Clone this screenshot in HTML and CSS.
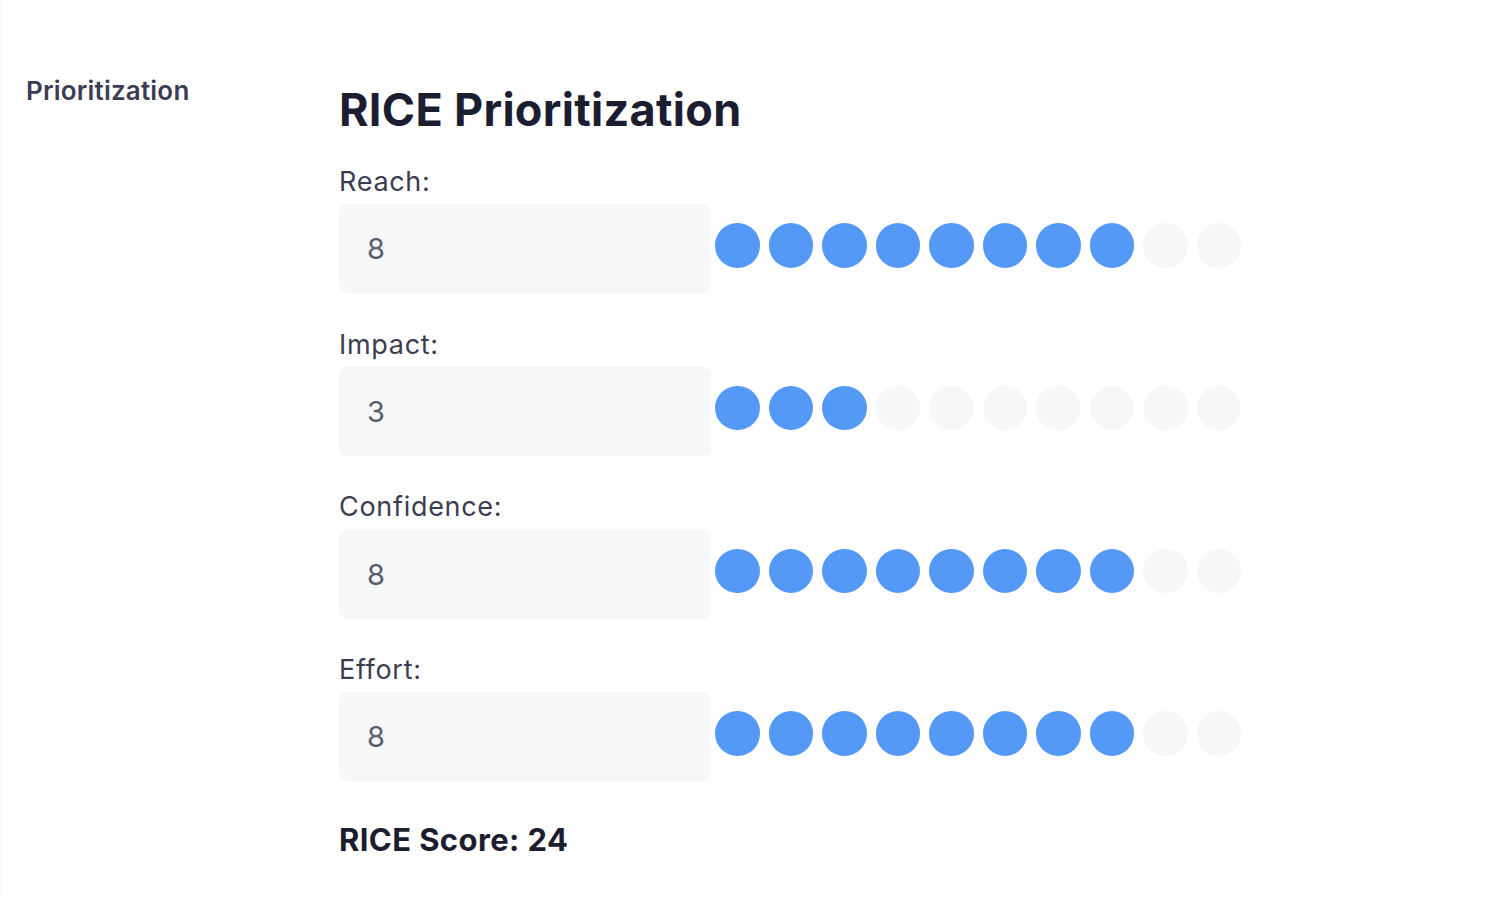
FILE: index.html
```html
<!DOCTYPE html>
<html lang="en">
<head>
    <meta charset="UTF-8">
    <meta name="viewport" content="width=device-width, initial-scale=1.0">
    <title>RICE Prioritization</title>
    <link rel="stylesheet" href="styles.css">
</head>
<body>
    <div class="page">
        <aside class="side">
            <div class="side-title">Prioritization</div>
        </aside>
        <main class="rice">
            <h1>RICE Prioritization</h1>

            <div class="field">
                <label>Reach:</label>
                <div class="row">
                    <div class="value">8</div>
                    <div class="dots" data-value="8"></div>
                </div>
            </div>

            <div class="field">
                <label>Impact:</label>
                <div class="row">
                    <div class="value">3</div>
                    <div class="dots" data-value="3"></div>
                </div>
            </div>

            <div class="field">
                <label>Confidence:</label>
                <div class="row">
                    <div class="value">8</div>
                    <div class="dots" data-value="8"></div>
                </div>
            </div>

            <div class="field">
                <label>Effort:</label>
                <div class="row">
                    <div class="value">8</div>
                    <div class="dots" data-value="8"></div>
                </div>
            </div>

            <div class="score">RICE Score: 24</div>
        </main>
    </div>

    <script>
        // fill each dot row, 10 dots, first n are on
        document.querySelectorAll('.dots').forEach(function (box) {
            const n = parseInt(box.dataset.value, 10);
            for (let i = 0; i < 10; i++) {
                const dot = document.createElement('span');
                dot.className = i < n ? 'dot on' : 'dot';
                box.appendChild(dot);
            }
        });
    </script>
</body>
</html>
```

FILE: styles.css
```css
body {
    margin: 0;
    font-family: Inter, "Noto Sans", sans-serif;
    background: #fff;
    color: #1b1d30;
}
.page {
    display: flex;
    min-height: 898px;
    border-left: 3px solid #fafafa;
}
.side {
    width: 313px;
    padding: 75px 0 0 23px;
}
.side-title {
    font-size: 26px;
    line-height: 1.2;
    font-weight: 600;
    letter-spacing: 0.2px;
    color: #3b3d52;
}
.rice {
    padding-top: 83px;
}
h1 {
    margin: 0 0 29px 0;
    font-size: 45px;
    line-height: 1.2;
    font-weight: 700;
    letter-spacing: 0.3px;
    color: #1b1d30;
}
.field {
    margin-bottom: 35.3px;
}
.field label {
    display: block;
    font-size: 27px;
    line-height: 1.2;
    font-weight: 400;
    letter-spacing: 0.7px;
    color: #3b3d52;
    margin-bottom: 6px;
}
.row {
    display: flex;
    align-items: center;
    gap: 4px;
}
.value {
    box-sizing: border-box;
    width: 372px;
    height: 89px;
    padding: 0 28px;
    display: flex;
    align-items: center;
    border-radius: 8px;
    background: #f6f7f9;
    font-size: 29px;
    color: #5a5c70;
}
.dots {
    display: flex;
    gap: 9px;
    margin-top: -7px;
}
.dot {
    width: 44.5px;
    height: 44.5px;
    border-radius: 50%;
    background: #f6f7f9;
}
.dot.on {
    background: #5599f7;
}
.score {
    margin-top: 40px;
    font-size: 31px;
    line-height: 1.2;
    font-weight: 700;
    letter-spacing: 0.4px;
    color: #1b1d30;
}
```
